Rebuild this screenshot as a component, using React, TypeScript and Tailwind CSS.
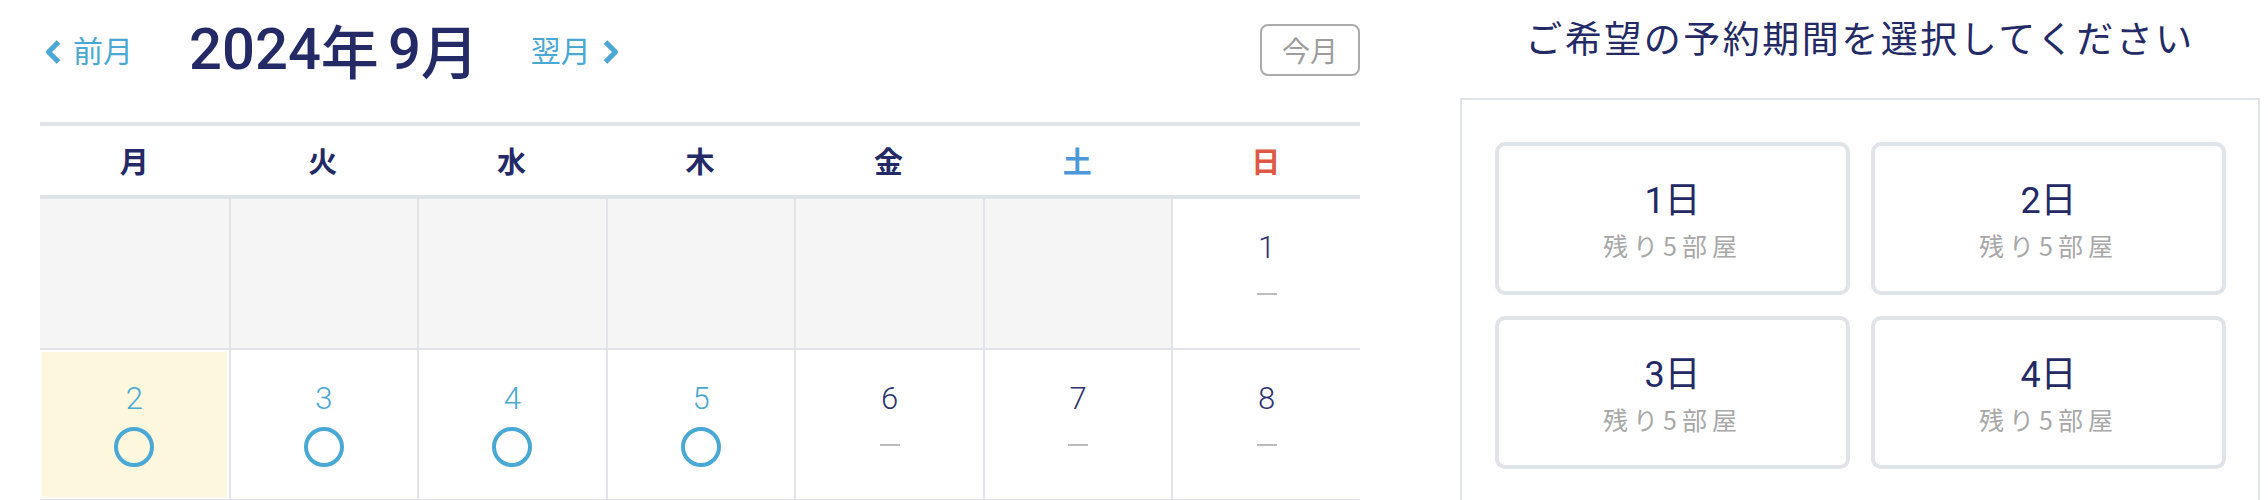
import React from "react";

const NAVY = "text-[#232a66]";

function ChevronLeft() {
  return (
    <svg width="18" height="26" viewBox="0 0 18 26" className="mt-[6px] shrink-0">
      <polyline points="14.5,3 4.5,13 14.5,23" fill="none" stroke="#4aa8d4" strokeWidth="5" strokeLinejoin="round" strokeLinecap="butt" />
    </svg>
  );
}
function ChevronRight() {
  return (
    <svg width="18" height="26" viewBox="0 0 18 26" className="mt-[6px] shrink-0">
      <polyline points="3.5,3 13.5,13 3.5,23" fill="none" stroke="#4aa8d4" strokeWidth="5" strokeLinejoin="round" strokeLinecap="butt" />
    </svg>
  );
}

type Day = { d: number | null; avail?: boolean; today?: boolean };

function buildWeeks(): Day[][] {
  const days: Day[] = [];
  for (let i = 0; i < 6; i++) days.push({ d: null });
  for (let d = 1; d <= 30; d++) days.push({ d, avail: d >= 2 && d <= 5, today: d === 2 });
  while (days.length % 7 !== 0) days.push({ d: null });
  const weeks: Day[][] = [];
  for (let i = 0; i < days.length; i += 7) weeks.push(days.slice(i, i + 7));
  return weeks;
}

function Cell({ day, first }: { day: Day; first: boolean }) {
  const border = first ? "" : "border-l-2 border-[#e1e3e8]";
  if (day.d === null) {
    return <div className={`${border} bg-[#f5f5f5] h-[149px]`} />;
  }
  return (
    <div className={`${border} h-[149px] p-[2px]`}>
      <div className={`h-full flex flex-col items-center ${day.today ? "bg-[#fdf7de]" : "bg-white"}`}>
        <div
          className={`mt-[31px] text-[31px] leading-[31px] font-light font-['Roboto',sans-serif] ${
            day.avail ? "text-[#4aa8d4]" : "text-[#2d3270]"
          }`}
        >
          {day.d}
        </div>
        <div className="mt-[13px] h-[40px] w-[40px] flex justify-center">
          {day.avail ? (
            <div className="w-[40px] h-[40px] rounded-full border-[4px] border-[#4aa8d4]" />
          ) : (
            <div className="mt-[17px] w-[20px] h-[2px] bg-[#bdbdbd]" />
          )}
        </div>
      </div>
    </div>
  );
}

export default function App() {
  const weeks = buildWeeks();
  const weekdays = [
    { t: "月", c: "text-[#232a66]" },
    { t: "火", c: "text-[#232a66]" },
    { t: "水", c: "text-[#232a66]" },
    { t: "木", c: "text-[#232a66]" },
    { t: "金", c: "text-[#232a66]" },
    { t: "土", c: "text-[#4d98dc]" },
    { t: "日", c: "text-[#de5845]" },
  ];
  const periods = ["1日", "2日", "3日", "4日"];

  return (
    <div className="w-[2268px] bg-white font-['Liberation_Sans','Noto_Sans_CJK_JP',sans-serif] flex pl-[40px] pr-[8px] gap-[100px]">
      {/* Calendar column */}
      <div className="w-[1320px] shrink-0">
        <div className="h-[98px] flex items-center">
          <div className="flex items-center pl-[4px]">
            <ChevronLeft />
            <span className="ml-[11px] text-[30px] leading-none text-[#4aa8d4] font-['Noto_Sans_CJK_JP',sans-serif]">前月</span>
          </div>
          <div className={`ml-[56px] text-[58px] leading-none ${NAVY} flex items-center`}>
            <span className="font-['Roboto',sans-serif] font-medium">2024</span>
            <span className="font-['Noto_Sans_CJK_JP',sans-serif] font-medium">年</span>
            <span className="ml-[9px] font-['Roboto',sans-serif] font-medium">9</span>
            <span className="font-['Noto_Sans_CJK_JP',sans-serif] font-medium">月</span>
          </div>
          <div className="ml-[52px] flex items-center">
            <span className="text-[30px] leading-none text-[#4aa8d4] font-['Noto_Sans_CJK_JP',sans-serif]">翌月</span>
            <span className="ml-[11px]">
              <ChevronRight />
            </span>
          </div>
          <div className="ml-auto mt-[2px] w-[100px] h-[52px] border-2 border-[#ababab] rounded-[8px] flex items-center justify-center text-[28px] leading-none text-[#9d9d9d] font-['Noto_Sans_CJK_JP',sans-serif]">
            今月
          </div>
        </div>

        <div className="mt-[24px] border-t-4 border-[#dfe2e7]">
          <div className="grid grid-cols-7 h-[73px] border-b-4 border-[#dfe2e7]">
            {weekdays.map((w) => (
              <div key={w.t} className={`flex items-center justify-center text-[29px] font-bold font-['Noto_Sans_CJK_JP',sans-serif] ${w.c}`}>
                {w.t}
              </div>
            ))}
          </div>
          {weeks.map((week, i) => (
            <div key={i} className="grid grid-cols-7 border-b-2 border-[#e1e3e8]">
              {week.map((day, j) => (
                <Cell key={j} day={day} first={j === 0} />
              ))}
            </div>
          ))}
        </div>
      </div>

      {/* Period selection column */}
      <div className="w-[800px] shrink-0">
        <div className="h-[74px] flex items-center justify-center">
          <h2 className="text-[37px] leading-none tracking-[2.5px] text-[#232a66] font-['Noto_Sans_CJK_JP',sans-serif]">
            ご希望の予約期間を選択してください
          </h2>
        </div>
        <div className="mt-[24px] border-2 border-[#e0e3e8] pt-[42px] pl-[33px] pr-[32px] pb-[40px]">
          <div className="grid grid-cols-2 gap-[21px]">
            {periods.map((p) => (
              <div key={p} className="h-[153px] border-4 border-[#e0e3e8] rounded-[10px] flex flex-col items-center justify-center">
                <div className="text-[36px] leading-none text-[#232a66]">
                  <span className="font-['Roboto',sans-serif]">{p.slice(0, 1)}</span>
                  <span className="font-['Noto_Sans_CJK_JP',sans-serif]">{p.slice(1)}</span>
                </div>
                <div className="mt-[14px] text-[25px] leading-none tracking-[5px] text-[#a8a8a8] font-['Noto_Sans_CJK_JP',sans-serif]">
                  残り5部屋
                </div>
              </div>
            ))}
          </div>
        </div>
      </div>
    </div>
  );
}
